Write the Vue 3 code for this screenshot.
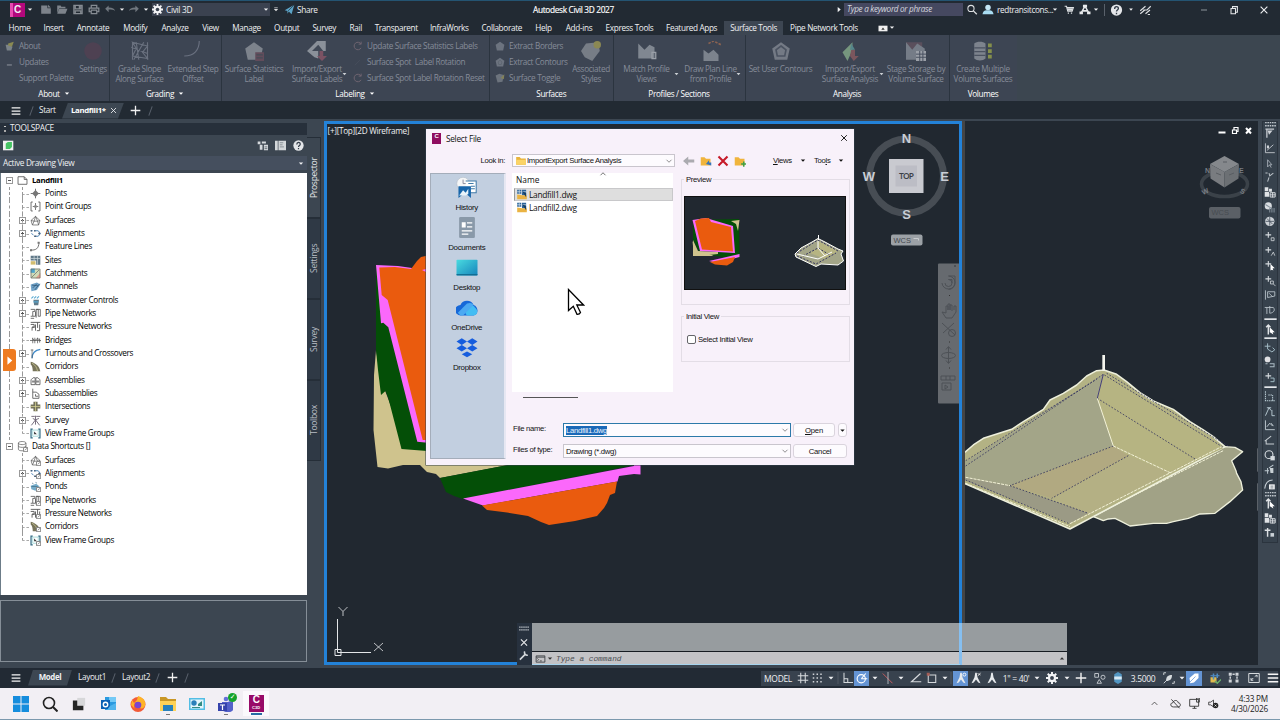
<template>
  <div class="window">
    <header class="titlebar">
      <div class="logo">C</div>
      <Icon name="down" class="c8" />
      <Icon v-for="n in ['new', 'open', 'save', 'print', 'undo']" :key="n" :name="n" class="qa" />
      <Icon name="down" class="c8" />
      <Icon name="redo" class="qa" />
      <Icon name="down" class="c8" />
      <div class="workspace"><Icon name="gear" class="c11" /><span>Civil 3D</span><Icon name="down" class="c8" /></div>
      <Icon name="downbar" class="c8" />
      <Icon name="plane" class="plane" />
      <span class="share">Share</span>
      <span class="app-title">Autodesk Civil 3D 2027</span>
      <Icon name="right" class="c8" />
      <div class="search">Type a keyword or phrase</div>
      <div class="account">
        <Icon name="search" class="w16" />
        <Icon name="person" class="w16" />
        <span class="user">redtransitcons...</span>
        <Icon name="down" class="c8" />
        <Icon name="cart" class="w20" />
        <Icon name="autodesk" class="w12" />
        <Icon name="down" class="w10" />
        <i class="vline"></i>
        <Icon name="help" class="w24" />
        <Icon name="down" class="c6" />
        <Icon name="assist" class="w24" />
      </div>
      <div class="win-buttons">
        <Icon name="min" /><Icon name="restore" /><Icon name="close" />
      </div>
    </header>

    <nav class="menu">
      <span v-for="t in tabs" :key="t[0]" :class="{ active: t[0] === 'Surface Tools' }" :style="{ width: t[1] + 'px' }">{{ t[0] }}</span>
      <Icon name="ribbonmin" class="ribbonmin" /><Icon name="down" class="c8" />
    </nav>

    <section class="ribbon">
      <div v-for="p in panels" :key="p.title" class="panel" :style="{ width: p.w + 'px' }">
        <div class="panel-body">
          <template v-for="(g, i) in p.groups" :key="i">
            <div v-if="g.list" class="small-list" :style="{ width: g.w + 'px' }">
              <div v-for="s in g.list" :key="s[1]"><Icon :name="s[0]" /><span>{{ s[1] }}</span></div>
            </div>
            <div v-else class="big" :style="{ width: g.w + 'px' }">
              <Icon :name="g.icon" />
              <span v-for="l in g.text" :key="l">{{ l }}</span>
              <Icon v-if="g.drop" name="down" class="drop" />
            </div>
          </template>
        </div>
        <div class="panel-title">{{ p.title }}<Icon v-if="p.more" name="down" class="c8" /></div>
      </div>
    </section>

    <div class="doc-tabs">
      <Icon name="burger" class="burger" />
      <i class="slash"></i>
      <span class="start">Start</span>
      <div class="doc-active"><b>Landfill1*</b><Icon name="close" /></div>
      <Icon name="plus" class="plus" />
      <i class="slash"></i>
    </div>

    <main>
      <aside class="toolspace">
        <div class="ts-col">
          <div class="ts-head"><i></i>TOOLSPACE</div>
          <div class="ts-tools">
            <Icon name="cube" /><span></span><Icon name="panes" /><Icon name="sheet" /><Icon name="help" />
          </div>
          <div class="ts-combo">Active Drawing View<Icon name="down" class="c8" /></div>
          <div class="tree">
            <div v-for="(r, i) in tree" :key="i" class="row" :class="{ root: r.root, bold: i === 0, last: r.last, only: i > 20 }">
              <i v-if="!r.root" class="branch"></i>
              <i class="box" :class="{ on: r.box, minus: r.root }"></i>
              <Icon :name="r.icon" />
              <span>{{ r.text }}</span>
            </div>
            <div class="flyout"><Icon name="right" /></div>
          </div>
          <div class="ts-preview"></div>
        </div>
        <div class="ts-tabs">
          <span class="cur">Prospector</span><span>Settings</span><span>Survey</span><span>Toolbox</span>
        </div>
      </aside>

      <section class="view left">
        <svg width="632" height="538" viewBox="327 124 632 538">
          <path fill="#cfc38d" d="M376 350 374 375 373.500 430 377.500 467 388 468.500 403 465 420 465 427 472 436 474 440 478 508 465 508 430 400 430 381 380Z" />
          <path fill="#044f07" d="M376 265V350L378 370 381 395 385.500 391 388 397 401.500 449 440 452V300Z" />
          <path fill="#044f07" d="M440 478 508 465H634L463 499 454 496 446 492Z" />
          <path fill="#fb68fb" d="M376 265 398 266 412 268 430 269V443L417.300 441.700 388.300 327.300 383.300 322.700 381 323.300Z" />
          <path fill="#ea5b0e" d="M379.300 267.500 395 267 411 269 417 261 421 257 430 255V440H422.700L387.700 300 381.700 295Z" />
          <path fill="#fb68fb" d="M422 270l4-1v3zM463 498.500 634 466 634 460H640.500V474.500L634 474 619 476 617.500 481.500 483 505.500Z" />
          <path fill="#ea5b0e" d="M482 505.500 617 481.500 615 493 610 495 607 503 604 508 597 516 575 521 549 525 541 522 528 516 507 512.500 487 510Z" />
          <text x="327.500" y="133.500" class="vp" textLength="82">[+][Top][2D Wireframe]</text>
          <g fill="none" stroke="#e4e6e8">
            <path d="M337.500 619V652.500H371M335 649.500h6v6h-6z" />
            <path stroke-width=".8" d="M338.500 607l4.500 4.500 4.500-4.500M343 611.500v4.500M374 643l9 8M383 643l-9 8" />
          </g>
          <circle cx="906.500" cy="176" r="37" fill="none" stroke="#474d54" stroke-width="7" />
          <path fill="#c9cad0" d="M889 159h34.500v34h-34.500z" />
          <path fill="#bcbdc5" d="M895.500 165.500h21.500v21h-21.500z" />
          <text x="906.500" y="179" text-anchor="middle" class="top" textLength="15">TOP</text>
          <g class="nesw" text-anchor="middle">
            <text x="906.500" y="143">N</text><text x="869" y="181">W</text>
            <text x="944.500" y="181">E</text><text x="906.500" y="218.500">S</text>
          </g>
          <rect x="891" y="234.500" width="31.500" height="11" rx="2" fill="#9ca1a6" />
          <text x="893.500" y="242.500" class="wcs">WCS</text>
          <path d="M913.500 238.500h5v2" fill="none" stroke="#c8cbce" />
          <rect x="938" y="263.500" width="24" height="140" rx="1" fill="#666a6f" />
          <g fill="none" stroke="#4d5156">
            <path d="M954 265l2 2M956 265l-2 2M942 283a6.500 6.500 0 1 0 6.500-7h6.500v7a6.500 6.500 0 0 1-6.500 6.500M945 283a3.500 3.500 0 1 0 3.500-3.500h3.500v3.500" />
            <path d="M942 312l4 6h6l4-6v-6h-2v4M942 312l4 1v-7h2v4-6h2v6-5h2v6M942 323l13 12M954 323l-11 10" />
            <circle cx="952" cy="333" r="3.500" />
            <path d="M948.500 347v16M946 349.500l2.500-3 2.500 3M946 360.500l2.500 3 2.500-3" />
            <ellipse cx="948.500" cy="355.500" rx="7" ry="3" />
            <path d="M941 376h14v4H941zM946 376v4M950 376v4M942 383h9v7h-9zM945 385l3 2-3 2z" />
            <path stroke="#333" d="M949 295.500h1M949 342h1M949 368h1" />
          </g>
        </svg>
      </section>
      <i class="divider"></i>
      <section class="view right">
        <svg width="293" height="544" viewBox="965 121 293 544">
          <g transform="translate(940 340) scale(.3333)" stroke-linejoin="round">
            <path fill="#a1a286" stroke="#eef0dc" stroke-width="4" d="M855 320 885 322 908 335 875 362 888 392 890 400 903 425 908 450 870 485 825 520 780 522 745 535 700 545 680 550 640 550 570 558 545 545 525 535 505 537 490 542 460 530Z" />
            <path fill="#b3b284" stroke="#eef0dc" stroke-width="4.500" d="M60 345 77 335 100 315 130 295 215 268 250 245 310 208 330 180 370 160 410 135 440 108 470 92 492 90 530 103 560 125 600 158 640 183 700 208 750 245 790 270 820 290 855 320 390 567 60 425Z" />
            <path fill="#a3a588" d="M60 375 490 103 472 175 520 318 210 437 60 410Z" />
            <path fill="#b6b482" d="M490 103 850 325 690 398 565 347 520 318 472 175Z" />
            <path fill="#b1a981" d="M210 437 520 318 565 347 335 475Z" />
            <path fill="#b4b084" d="M335 475 565 347 690 398 830 322 445 525Z" />
            <path fill="#9b9a85" d="M60 410 210 437 445 520 390 550 77 422Z" />
            <g fill="none" stroke="#34345e" stroke-width="2.500" stroke-dasharray="5 5">
              <path d="M77 378 490 103 850 322M77 362 470 118M500 100 865 318M472 175 770 360M520 318 210 437M565 347 335 475M210 437 445 520M77 420 390 552" />
              <path stroke-dasharray="none" stroke="#302a78" d="M490 103 472 175" />
            </g>
            <g fill="none" stroke="#f3f2d8" stroke-width="3">
              <path d="M472 175 520 318" />
              <path stroke-dasharray="9 3" d="M77 412 210 437M520 318 690 398M390 551 845 320M530 492 850 332M77 430 390 560" />
            </g>
            <path stroke="#f4f5ee" stroke-width="8" d="M491 45V92" />
            <path stroke="#8d9298" stroke-width="3" d="M954 325V395M954 430V512M60 150H73V172H60" fill="none" />
          </g>
          <ellipse cx="1224.500" cy="184" rx="23" ry="12.500" fill="none" stroke="#3b4249" stroke-width="3.500" />
          <path fill="#85888c" d="M1224.500 156l14.500 8-14.500 8-14.500-8z" />
          <path fill="#797c80" d="M1210 164l14.500 8v15.500l-14-9z" />
          <path fill="#6c7074" d="M1239 164l-14.500 8v15.500l14-9z" />
          <path stroke="#595d62" d="M1216 173l5 2M1229 175l5-2M1223 162h4" />
          <g fill="#777c82" class="mini"><text x="1202" y="194" transform="rotate(-25 1205 192)">W</text><text x="1240" y="194" transform="rotate(25 1243 192)">S</text><text x="1205" y="173">N</text><text x="1239" y="173">E</text></g>
          <rect x="1209" y="207" width="31.500" height="11.500" rx="2" fill="#5b6066" />
          <text x="1211.500" y="215" class="wcs dim">WCS</text>
          <g fill="none" stroke="#fff" stroke-width="1.500">
            <path d="M1218.500 132.500h7M1246 128l5 5.500M1251 128l-5 5.500" stroke-width="2" />
            <path d="M1232.500 130h4v3.500h-4zM1234 129.500v-2h4v4h-1.500" stroke-width="1.200" />
          </g>
        </svg>
      </section>
      <aside class="rail">
        <Icon v-for="(r, i) in rail" :key="i" :name="r" :class="{ thin: r === 'bar' || r === 'grip' }" />
      </aside>

      <div class="command">
        <div class="cmd-grip"><Icon name="grip" /><Icon name="close" /><Icon name="wrench" /></div>
        <div class="cmd-main">
          <div class="cmd-history"></div>
          <div class="cmd-input"><Icon name="prompt" /><Icon name="down" class="c8" /><span>Type a command</span><Icon name="up" class="c8" /></div>
          <i class="through"></i><i class="under"></i>
        </div>
      </div>

      <div class="dialog">
        <div class="d-title"><div class="d-logo">C</div>Select File<Icon name="close" /></div>
        <div class="d-look">
          <label>Look in:</label>
          <div class="combo"><Icon name="folder" /><span>ImportExport Surface Analysis</span><Icon name="chev" class="chev" /></div>
          <Icon name="back" class="tool" /><Icon name="folderup" class="tool" /><Icon name="delete" class="tool" /><Icon name="folderadd" class="tool" />
          <span class="drop-btn views"><u>V</u>iews</span><Icon name="down" class="c8" />
          <span class="drop-btn tools">Too<u>l</u>s</span><Icon name="down" class="c8" />
        </div>
        <div class="d-body">
          <div class="places">
            <div v-for="p in places" :key="p[1]"><Icon :name="p[0]" /><span>{{ p[1] }}</span></div>
          </div>
          <div class="d-main">
            <div class="d-top">
              <div class="files">
                <div class="name">Name<Icon name="chevup" /></div>
                <div class="file sel"><Icon name="dwg" />Landfill1.dwg</div>
                <div class="file"><Icon name="dwg" />Landfill2.dwg</div>
              </div>
              <div class="side">
                <div class="group g1"><span>Preview</span>
                  <svg width="162" height="94" viewBox="684 196 162 94">
                    <path fill="#111" d="M684 196h162v94H684z" /><path fill="#212830" d="M685 197h160v92H685z" />
                    <path fill="#cfc38d" d="M692.500 241 697 252 718 252 712 256 694 256Z" />
                    <path fill="#044f07" d="M693 220 739 219 739.500 258 728 258 700 253 693 240Z" />
                    <path fill="#cfc38d" d="M693 240v16h7l18-2v-2l-20-1zM731 221l8.500-1-1.500 11-2-7z" />
                    <path fill="#fb68fb" d="M692.500 220 706 218 733 226 735 253 700 251ZM709 261 739.500 254v3L717 263z" />
                    <path fill="#ea5b0e" d="M695 221 701 218.500 709 218 711 222 731 227 733 251.500 702 249.500ZM710 262 735 257 733 262 727 265.500 715 264.500Z" />
                    <path fill="#a3a588" stroke="#fff" d="M795 254 801 248 812 242 818 238.500 825 242 838 249 843 251 841 254 843.500 261 838 265 821 264 816 266.500 796 257Z" />
                    <path fill="#b6b482" d="M818 241 838 251 825 259 810 253 818 248z" />
                    <path fill="none" stroke="#34345e" stroke-dasharray="2 1.500" d="M797 253 818 240 838 251M797 256 816 264 836 253M803 256 818 248 830 255" />
                    <path stroke="#fff" d="M818.500 235v5M797 254l21 5 14-7M818 241v7l7 8" fill="none" />
                  </svg>
                </div>
                <div class="group g2"><span>Initial View</span><label><i></i>Select Initial View</label></div>
              </div>
            </div>
            <i class="scroll"></i>
            <div class="field first">
              <label>File name:</label>
              <div class="combo focus"><mark>Landfill1.dwg</mark><Icon name="chev" class="chev" /></div>
              <button class="open"><u>O</u>pen</button><button class="more"><Icon name="down" /></button>
            </div>
            <div class="field">
              <label>Files of type:</label>
              <div class="combo"><span>Drawing (*.dwg)</span><Icon name="chev" class="chev" /></div>
              <button class="cancel">Cancel</button>
            </div>
          </div>
        </div>
        <svg class="cursor" width="18" height="28" viewBox="0 0 18 28"><path fill="#fff" stroke="#000" stroke-width="1.300" d="M1.500 1.500V22.500L6.300 18.300 10 26.300Q12.500 26.500 13.500 24.500L9.800 17H16.500Z" /></svg>
      </div>
    </main>

    <footer class="status">
      <div class="layouts">
        <Icon name="burger" class="burger" />
        <div class="model"><b>Model</b></div>
        <span class="lay">Layout1</span><i class="slash"></i><span class="lay l2">Layout2</span><i class="slash"></i>
        <Icon name="plus" class="plus" /><i class="slash"></i>
      </div>
      <div class="toggles">
        <span v-for="(s, i) in status" :key="i" :class="{ on: s[2], txt: s[3], arrow: s[0] === 'down' }" :style="{ width: s[1] + 'px' }">
          <template v-if="s[3]">{{ s[3] }}</template><Icon v-else :name="s[0]" />
        </span>
      </div>
    </footer>

    <footer class="taskbar">
      <div class="apps">
        <span v-for="a in apps" :key="a" :class="a"><Icon v-if="a !== 'civil'" :name="a" /><em v-else>C<small>C3D</small></em></span>
      </div>
      <div class="tray">
        <Icon name="chevup" /><Icon name="cloudoff" /><Icon name="monitor" /><Icon name="mute" />
        <div class="clock">4:33 PM<br>4/30/2026</div>
      </div>
    </footer>
  </div>
</template>

<script setup>
import { h } from 'vue'

// every glyph sits on a 16 x 16 grid
const S = (d, c = '#cfd3d8', w = 1.4) => `<path d="${d}" fill="none" stroke="${c}" stroke-width="${w}"/>`
const F = (d, c = '#cfd3d8') => `<path d="${d}" fill="${c}"/>`
const link = F('M9 9h7v7H9z', '#fff') + S('M9.500 9.500h6v6h-6zM11.500 13.500l3-3', '#555', 1)
const surf = S('M1.500 8 8 2l6.500 6-2 6.500h-9zM1.500 8l4.500 1 2-7 3 7 3.500-1M6 9l-2.500 5.500M11 9l1.500 5.500M6 9h5', '#555', 1)
const align = S('M1 4h3M6 4h6l3 4-3 4H8M5 10l-3-2', '#4f86b8', 1.4) + F('M1 3h2v2H1zM6 3h2v2H6zM12 7h3v2h-3zM6 11h3v2H6z', '#4a6078')
const pipe = S('M1 2h6v3H4v7H1M4 12h4V5M9 14V2h3v10h3V2h-6M1 15h5', '#555', 1.2)
const pressure = S('M1 2h14M1 5h5v4H3v5M8 5v9M11 2v8M14 5v9h-4M3 9h4', '#555', 1.3)
const corr = F('M1 1C9 3 14 8 15 15H4C4 10 3 6 1 5z', '#77745a') + S('M3 3c5 3 7 7 8 12', '#d8d39a', 1)
const frame = S('M4 1.500H1.500v13H4M12 1.500h2.500v13H12', '#356e86', 1.800) + S('M4 3h8v9H4z', '#8cc', 1) + F('M6 5l4 4H6z', '#333')
const person = F('M7 1h2l1 6 4 8-3-1-3-4-3 4-3 1 4-8z', '#e6e9ec')
const sparkle = S('M6 2v8M2 6h8', '#d5dade', 1.500)
const shell = 'M8 1 15 6 13 15H3L1 6z'
const fold = F('M1 3h5l2 2h6v9H1z', '#f0b43c')

const icons = {
  down: F('M3 5.500h10L8 11z', 'currentColor'), up: F('M3 10h10L8 5z', 'currentColor'), right: F('M5 2l7 6-7 6z', 'currentColor'),
  downbar: S('M4 4h8', '#ddd', 1.600) + F('M3 7h10l-5 5z', '#ddd'),
  new: F('M1 2h9v4h5v8H1zM11 1l4 4h-4z', '#7d838b'), open: F('M1 2h5l1 2h6v2H4l-3 7zM4 7h12l-3 7H1z', '#7d838b'),
  save: S('M2 2h12v12H2zM4 2v5h8V2M4 14v-4h8v4M10 3v3', '#868c93', 1.800), print: S('M4 6V2h8v4M3 11H1V6h14v5h-2M4 9h8v5H4z', '#868c93', 1.800),
  undo: F('M1 7l5-5v3c6 0 9 2 9 5-2-2-5-2-9-2v4z', '#70777f'), redo: F('M15 7l-5-5v3C4 5 1 7 1 10c2-2 5-2 9-2v4z', '#70777f'),
  gear: S('M8 0v16M0 8h16M2.300 2.300l11.400 11.400M13.700 2.300 2.300 13.700', '#f2f3f5', 2.600) + '<circle cx="8" cy="8" r="5.600" fill="#f2f3f5"/><circle cx="8" cy="8" r="2.600" fill="#3a4350"/>',
  plane: F('M1 9 15 1 11 15 7 11 5 14V10z', '#5ba3c7') + S('M15 1 6 10', '#25303a', 1),
  search: '<circle cx="6.500" cy="6.500" r="4.500" fill="none" stroke="#e0e2e4" stroke-width="1.500"/>' + S('M10 10l5 5', '#e0e2e4', 1.800),
  person: '<circle cx="8" cy="5" r="4" fill="#c5e6f5"/>' + F('M0 15c1-6 4-6 8-6s7 0 8 6z', '#a9dcf2'),
  cart: S('M1 2h3l2 8h7l2-6H5', '#dcdfe2', 1.800) + F('M5 5h9l-1 4H6zM6 12h2v2H6zM11 12h2v2h-2z', '#dcdfe2'),
  autodesk: S('M3 12 8 3l5 9M5 10h6', '#e6e8ea', 2.200) + F('M5 1h6v4H5zM0 11h5v4H0zM11 11h5v4h-5z', '#e6e8ea'),
  help: '<circle cx="8" cy="8" r="7.500" fill="#e4e6e9"/>' + S('M5.500 6.500c0-4 5-4 5-.500 0 2-2.500 2-2.500 4M8 11.500v2', '#333c48', 1.800),
  assist: S('M1 9l7-6M5 8h5l5-5M1 13l6-5M8 13l6-5M11 14h3', '#dfe1e4', 1.500),
  min: S('M4 8h8', '#9aa0a6', 1.200), restore: S('M4 6h6v7H4zM6 6V3.500h6.500V11H10', '#e5e7e9', 1.400), close: S('M3.500 3.500l9 9M12.500 3.500l-9 9', 'currentColor', 1.500),
  ribbonmin: F('M0 3h16v10H0z', '#f0f0f0') + F('M5 10h6L8 6z', '#333'),
  burger: S('M1 3h14M1 8h14M1 13h14', '#f5f5f5', 2), plus: S('M8 1v14M1 8h14', '#f0f0f0', 1.900),
  about: F('M1 6h6l5 3-2 6H3z', '#7b8389') + F('M5 4l9-3-3 8-6-2z', '#8a8a52'), updates: F('M3 12h8v1.500H3z', '#969ba4'), blank: '',
  settings: '<circle cx="8" cy="8" r="7" fill="#643c52" opacity=".45"/>',
  grade: S('M2 1l12 3-4 5 4 5-12-2 3-6zM1 5l13 5M5 1l2 14M11 1 3 15M14 1v14M2 1v14', '#6a717f', .9),
  step: S('M13 0c0 7-4 12-12 12', '#6a7180', .9),
  stat: F(shell, '#7d838c') + F('M9 9h7v7H9z', '#624c5b') + S('M10 11h5M10 13.500h5', '#444c58', 1),
  ioLabel: F('M0 8 8 0h7v8H9v6L6 13z', '#8a9099') + F('M4 8l5-5 4 5z', '#414957') + F('M10 8h3v4h3l-4 4-4-4h2z', '#7b5263'),
  reset: S('M13 5a6 6 0 1 0 0 6M13 1v4H9', '#6f6470', 1.600), rot: S('M3 13l8-8', '#49505e', 1),
  pent: F(shell, '#6c737f'), pent2: F(shell, '#6c737f') + S('M8 5 11 8 10 12H6L5 8z', '#59606c', 1), toggle: F('M1 4 7 1l7 2-2 11-8 1z', '#6c737d') + F('M9 8l6-6-1 8z', '#83825a'),
  assoc: F('M0 8 4 2l10-1 1 7-6 8-6-3z', '#777d86') + '<circle cx="13" cy="3" r="3" fill="#8b8853"/>',
  match: F('M1 2l5 5 4-4 4 2v9H1z', '#808791') + S('M12 9h3v5h-3z', '#9aa0a8', 1),
  plan: F('M2 7l4 3 4-3 4 4v5H2z', '#7c838d') + S('M6 2l4-2 6 3', '#8c6351', 1.300).replace('fill="none"', 'fill="none" stroke-dasharray="2 1"'),
  contour: F(shell, '#747a85') + S('M8 4l4 3-1 5H5L4 7z', '#4b5361', 1.300),
  ioAnalysis: F('M2 9 10 1v6l-4 9z', '#76967e') + F('M9 7h3v5h3l-4 4-3-4z', '#7b565d') + F('M9 2l3 5H8z', '#55868b'),
  stage: F('M0 1h13v13H0z', '#5a4f5c') + F('M0 1l5 6 4-5 6 4v9H0z', '#757c87') + F('M8 8h8v8H8z', '#9a9fa7') + S('M8 10.500h8M8 13h8M11 8v8M13.500 8v8', '#485160', .8),
  volumes: F('M1 2c2-2 7-2 9 0v12c-2 2-7 2-9 0z', '#7d838d') + S('M1 5.500h9M1 8.500h9M1 11.500h9', '#4b5260', 1) + F('M12 2h3v3h-3zM12 6.500h3v3h-3zM12 11h3v3h-3z', '#85904b'),
  cube: F('M0 1h15v14H0z', '#f2f2f2') + F('M4 5l3-2h6v7l-3 3H4z', '#47c464'), panes: F('M1 2h4v4H1zM7 2h6v3H7zM4 7h4v7H4zM10 7h6v8h-6z', '#d5d9dd') + S('M11 10h4M11 12.500h4', '#444e59', 1),
  sheet: F('M0 1h4v14H0zM5 1h11v14H5z', '#d3d7da') + S('M7 4h5M7 7h4M7 10h6', '#6a737b', 1),
  page: S('M1.500 2.500h9l4 4v7h-13zM10.500 2.500v4h4', '#555', 1.200),
  point: S('M8 1v14M1 8h14', '#666', 1.300) + F('M8 3l5 5-5 5-5-5z', '#777'), pgroup: S('M4 1.500H1.500v13H4M12 1.500h2.500v13H12M8 3v10M4 8h8', '#555', 1.200) + F('M8 5l3 3-3 3-3-3z', '#888'),
  surf, align, feature: S('M1 13c7 1 12-2 12-11', '#555', 1.200) + F('M0 12h3v3H0zM11 1h3v3h-3z', '#777'),
  sites: F('M1 1h14v13H9V8H1z', '#5f7787') + F('M1 9h7v5H1z', '#d2bd70') + S('M1 5h14M6 1v7M11 1v13', '#d5dfe3', 1), catch: F('M1 1h14v14H1z', '#cfdcb8') + F('M1 1h6v6H1z', '#4ba3cb') + F('M8 15l7-8v8z', '#e1a08b') + S('M2 14 13 3M1.500 1.500h13v13h-13z', '#666', 1),
  channel: F('M1 5l9-3 5 3-5 8-8 2z', '#73a5ca') + S('M3 6l9 1M4 10l6-6M7 13l7-9', '#345b7b', 1.200), storm: F('M5 7h8l-1 8H6z', '#607b8b') + S('M2 5l3-3M6 5l3-3M10 5l3-3M5 10h7', '#56a7d0', 1.500),
  pipe, pressure, bridge: S('M0 8h16M4 4v8M7 4v8M11 4v8M14 5v6M3 5l4 3 4-3 4 3', '#555', 1.100), turnout: S('M3 15C3 7 8 3 15 2', '#3f8ac9', 1.800) + S('M3 15V2M1 3h4', '#555', 1), corr,
  assembly: S('M1.500 14V7l3-3h3v10zM8.500 14V4h3l3 3v7z', '#555', 1.200) + F('M3 8h10v3H3z', '#888'), subasm: S('M4 1v14h9V9L9 6H4M8 9v3h4', '#555', 1.200),
  inter: F('M5 1h6v14H5zM1 5h14v6H1z', '#74725a') + S('M8 1v14M1 8h14', '#ddd998', 1), survey: S('M2 2h5M9 2h6M8 1v6M8 7 2 15M8 7l6 8M4 5l4 2 5-2M8 7v7', '#6a6070', 1.300), frame,
  db: S('M2 3c0-3 11-3 11 0v9c0 3-11 3-11 0zM2 3c0 3 11 3 11 0M2 7c0 3 11 3 11 0', '#555', 1) + link,
  surfL: surf + link, alignL: align + link, pondL: F('M1 7l8-3 5 4-6 6-6-2z', '#74abc9') + S('M3 3l2 1M8 2l2 1M2 8h9', '#406b80', 1) + link, pipeL: pipe + link, pressureL: pressure + link, corrL: corr + link, frameL: frame + link,
  bar: S('M0 8h16', '#e3e6e9', 2.200), grip: S('M1 6h14M1 10h14', '#c1c7cd', 1.800).replace('fill="none"', 'fill="none" stroke-dasharray="2 1"'),
  r1: S('M2 2h12M4 3v11', '#c7ccd2', 1.800) + F('M5 4h7l-5 6z'), r2: S('M2 1v13h13M4 11l9-8', '#c7ccd2', 1.200) + F('M4 4h3v4H4z'), r3: S('M5 3v10l3-3 2 4M5 3l6 7H8', '#aab2ba', 1.200), r4: S('M2 2h3M7 2l1 4 5-4M7 8l-2 6', '#bdc4ca', 1.400),
  r5: F('M1 1h5v5H1zM1 7h6v7H1zM7 3h4v4H7z', '#e0e3e6') + S('M8.500 8.500h7v6h-7zM12 8v7M8 11.500h8', '#dce0e3', 1.300), r6: '<circle cx="6" cy="6" r="5" fill="#d8dce0"/>' + S('M8 9v6M11 9v6M14 9v6M2 4l8 5', '#84909b', 1.400), r7: '<circle cx="8" cy="8" r="6.500" fill="#ccd1d6"/>' + S('M2 8h12M8 2v12M4 4l8 8', '#4b5662', 1.200),
  r8: sparkle + S('M10 10h4v4h-4z', '#c8cdd2', 1.200), r9: sparkle + S('M10 14l3-5 2 5', '#c8cdd2', 1.200), r10: sparkle + F('M9 6l6 6h-3l1 3-2-1-2 1z', '#fff'), r11: sparkle + S('M9 9h4v4H9zM13 13l3 3', '#c8cdd2', 1.200),
  r12: S('M2 1v13M5 3h10v6L5 11zM7 5l5 5', '#bcc5cc', 1.200), r13: S('M1 4h12c4 5-2 8-5 8V2M4 4v9', '#bcc5cc', 1.200), r14: S('M3 5l3-3 3 3M6 3v12', '#e0e3e6', 2) + F('M8 5l7 7h-3l1 3-5-3z', '#fff'),
  r15: S('M1 5h8M5 1v8M5 9l6 4 4-3-3-3', '#a8c1ca', 1.300), r16: '<circle cx="5" cy="4" r="4" fill="#e1e1e4"/>' + S('M8 10h6v4H8M2 10h3', '#adbdc6', 1.400), r17: sparkle + S('M9 9h5v5H9', '#a6c0c9', 1.300),
  r18: S('M2 1v13h13M6 6h6v8', '#b9cbd3', 1.400).replace('fill="none"', 'fill="none" stroke-dasharray="2 1"'), r19: S('M2 14 7 3l3 4M4 3h6M11 6v8h4', '#b9cbd3', 1.300), r20: S('M2 1v13h13M4 10l4-5 4 4M10 5l3 4', '#c2ccd2', 1.300), r21: S('M1 9l9-7M3 7v6h11', '#c8ced3', 1.400),
  r22: '<circle cx="7" cy="7" r="5.500" fill="none" stroke="#d6dbdf" stroke-width="1.500"/>' + F('M9 9h6v6H9z', '#d6dbdf'), r23: S('M1 10h6M7 6l6-4M5 6v8', '#bdc8cf', 1.400) + F('M8 6h5v7H9z', '#c8d0d4'), r24: S('M1 14C2 6 6 2 12 2', '#c7cfd5', 1.400) + F('M7 8h8v7H7z', '#f1f2f3') + S('M9 10.500h4M9 13h4', '#58636d', 1), r25: S('M1 5h8M5 2v12', '#dce0e3', 2) + F('M9 9h5v5H9z', '#cbd2d7'),
  wrench: S('M2 14l8-8M9 2a4 4 0 0 0 4.500 5.500', '#d5d9dc', 2.400), prompt: S('M1 3h14v10H1zM1 5h14', '#3c3f43', 1.400) + S('M3 7l2 2-2 2M7 11h3', '#333', 1.200),
  folder: F('M1 3h5l2 2h7v9H1z', '#e8b33b') + F('M1 7h14v7H1z', '#fbd466'), back: F('M0 8l7-6v4h8v4H7v4z', '#ababb0'), folderup: fold + F('M8 12l4-5v3h3v4z', '#3576bd'), folderadd: fold + S('M13 8.500v7M9.500 12h7', '#3fa046', 2), delete: S('M2 2l12 12M14 2 2 14', '#c61a28', 2.800),
  chev: S('M3 5.500l5 5 5-5', '#555', 1.300), chevup: S('M3 10.500l5-5 5 5', '#444', 1.500),
  dwg: F('M1 1h6v6H1zM8 1h6v8H8z', '#2b6399') + S('M1 4h13M4 1v6', '#d7e5ef', 1) + F('M1 8l7 1 7 0v6H1z', '#eab343') + F('M8 3l6 3v6z', '#163e62'),
  history: '<circle cx="5" cy="5" r="4.800" fill="#f5f6f7" stroke="#b5bfca" stroke-width=".5"/>' + S('M5 2v3h3', '#889', .7) + F('M7 3h8v9H7z', '#fff') + S('M7 3h8v9H7M9 5h4M11 7h3M11 9h3', '#3f7aa8', .8) + F('M1.500 7h9.500v9l-4.500-4L1.500 16z', '#1765aa') + F('M2 14l3-4 2 2 2-3v4l-2 1z', '#e9f3fa'),
  documents: '<rect x="2" y="0" width="12" height="16" rx="1" fill="#8999a9"/>' + F('M4 4h3v4H4zM8 4h4v1H8zM8 7h4v1H8zM4 10h8v1H4zM4 12.500h5v1H4z', '#fff'),
  desktop: '<defs><linearGradient id="dg" x2="1" y2="1"><stop stop-color="#49dbe0"/><stop offset="1" stop-color="#1684bc"/></linearGradient></defs><rect y="2" width="16" height="12" rx=".6" fill="url(#dg)"/>' + F('M0 13h16v1H0z', '#126c92'),
  onedrive: F('M3 14a4 4 0 0 1 0-8 5.500 5.500 0 0 1 10 0c4 1 4 8 0 8z', '#1668d8') + F('M8 14a4 4 0 0 1 0-6c2-2 5-2 6 0 3 2 2 6-1 6z', '#42bdf3') + F('M1 12 8 5c3-1 4 0 5 1L5 14H3z', '#4ba9f2'),
  dropbox: F('M4 1l4 2.500-4 2.500-4-2.500zM12 1l4 2.500-4 2.500-4-2.500zM4 6l4 2.500L4 11 0 8.500zM12 6l4 2.500-4 2.500-4-2.500zM8 11l4 2.200L8 15.500l-4-2.300z', '#165dde'),
  grid: S('M5 1v14M11 1v14M1 5h14M1 11h14', '#d8dcdf', 1.400), dots: F('M1 2h2v2H1zM6 2h2v2H6zM11 2h2v2h-2zM1 7h2v2H1zM6 7h2v2H6zM11 7h2v2h-2zM1 12h2v2H1zM6 12h2v2H6zM11 12h2v2h-2z'), ortho: S('M4 1v13h12M4 9h5v5', '#d5d9dc', 1.400),
  polar: '<circle cx="7" cy="9" r="5.500" fill="none" stroke="#fff" stroke-width="1.500"/>' + S('M7 9h8M7 9l6-7', '#fff', 1.500), iso: S('M1 2l13 13', '#c65a60', 1.300) + S('M8 0v16', '#b8bec4', 1.200), angle: S('M14 2 2 13h13', '#d5d9dc', 1.600), osnap: S('M3 4h10v10H3z', '#d5d9dc', 1.400) + F('M1 1h4v4H1z', '#a35c56'),
  person2: person, annot: person + '<circle cx="12.500" cy="3.500" r="2" fill="none" stroke="#fff" stroke-width="1.200"/>', annot2: person + S('M11 5l3-4M10 2l4 2', '#ddd', 1.200),
  shapes: S('M1 2h5v5H1zM4 15l3-5 3 5z', '#c8cdd2', 1.200) + '<circle cx="12" cy="7" r="2.700" fill="none" stroke="#c8cdd2" stroke-width="1.200"/>', sphere: F('M3 3l5-3 5 3v10l-5 3-5-3z', '#5296c2') + F('M3 6h10v4H3z', '#d6e9f4'),
  leaf: F('M4 12c0-6 3-8 8-8 0 5-2 8-8 8z', '#d8dcdf') + S('M4 1H1v3M12 15h3v-3M1 15l4-4', '#d8dcdf', 1.200), tag: F('M2 8l7-6h5v6l-6 6-5 1z', '#fff') + S('M1 15 10 6', '#6594d3', 1),
  lock: F('M2 7h8v7H2z', '#e0bb4e') + F('M5 2h2v8H5zM10 2h2v6h-2z', '#4f8bc0') + S('M2 5h12', '#4f8bc0', 1.500) + S('M8 12l3 3 5-5', '#6ab06c', 1.800), nodes: F('M1 1h4v4H1zM10 1h4v4h-4zM1 10h4v4H1zM10 10h4v4h-4zM6 2h3v2H6zM2 6h2v3H2zM11 6h2v3h-2z'), clean: S('M1 2h14v12H1zM4 11l3-3M9 6l3-2v3M4 8v3h3', '#dadde0', 1.300), sep: S('M8 0v16', '#59626c', 1),
  windows: F('M0 0h7.500v7.500H0zM8.500 0H16v7.500H8.500zM0 8.500h7.500V16H0zM8.500 8.500H16V16H8.500z', '#168ddd'), find: '<circle cx="7" cy="7" r="5.500" fill="none" stroke="#222" stroke-width="1.600"/>' + S('M11 11l4.500 4.500', '#222', 2),
  tasks: F('M6 1h9v9H6z', '#d7d7d9') + F('M1 4h5v6h7v5H1z', '#252525'), outlook: F('M4 1h11v13H4z', '#2b9ae0') + F('M8 1h7v5H8z', '#74c9f6') + F('M0 4h9v9H0z', '#0b61b5') + '<circle cx="4.500" cy="8.500" r="2.200" fill="none" stroke="#fff" stroke-width="1.400"/>' + F('M9 10l6-3v7H6z', '#50b4ed'),
  firefox: '<circle cx="8" cy="8.500" r="7.500" fill="#f25a38"/>' + F('M2 4l2 3 3-3 1-4c6 2 8 5 7 10-2 3-4 3-5 2 2-4 0-6-3-6-3 1-4 4-2 7L1 9z', '#ffb327') + '<circle cx="8" cy="9" r="3.300" fill="#7a45d0"/>',
  explorer: F('M0 1h6l2 2h8v4H0z', '#c99726') + F('M0 5h16v10H0z', '#ffd257') + F('M3 9h10v6H3z', '#2881bd'), control: F('M0 2h16v12H0z', '#53bde4') + F('M1.500 3.500h13v9h-13z', '#e3f5fc') + '<circle cx="5" cy="7" r="2.700" fill="#287fb9"/>' + F('M9 8l4-3v5H9zM3 11h8v1H3z', '#348b83'),
  teams: '<circle cx="8" cy="3" r="2.300" fill="#6571d8"/><circle cx="12.500" cy="5" r="2" fill="#7c83e8"/>' + F('M4 6h11v8c-2 3-8 3-11 0z', '#5360c9') + F('M0 7h9v8H0z', '#3542ac') + S('M2 9h5M4.500 9v5', '#fff', 1.200),
  cloudoff: S('M5 13c-5 0-5-6-1-6 1-4 7-5 8 0 4 0 4 6 0 6zM2 2l12 13', '#333', 1.300), monitor: S('M1 2h13v10H1zM5 15h6M8 12v3M11 0h4v6h-4z', '#333', 1.300), mute: S('M1 6h3l4-3v10l-4-3H1z', '#333', 1.200) + '<circle cx="11" cy="11" r="4" fill="#222"/>' + S('M9.500 9.500l3 3M12.500 9.500l-3 3', '#fff', 1)
}
const Icon = (p) => h('svg', { class: 'ico', viewBox: '0 0 16 16', width: 12, height: 12, innerHTML: icons[p.name] })
Icon.props = ['name']

const tabs = [['Home', 35], ['Insert', 33], ['Annotate', 46], ['Modify', 38.5], ['Analyze', 41], ['View', 30], ['Manage', 42], ['Output', 38.5], ['Survey', 36.5], ['Rail', 26.5], ['Transparent', 54.5], ['InfraWorks', 51.5], ['Collaborate', 53.5], ['Help', 30], ['Add-ins', 41], ['Express Tools', 60], ['Featured Apps', 64.2], ['Surface Tools', 59.8], ['Pipe Network Tools', 81]]

const panels = [
  { title: 'About', more: true, w: 110, groups: [
    { w: 76, list: [['about', 'About'], ['updates', 'Updates'], ['blank', 'Support Palette']] },
    { w: 34, icon: 'settings', text: ['Settings'] }] },
  { title: 'Grading', more: true, w: 112, groups: [
    { w: 59, icon: 'grade', text: ['Grade Slope', 'Along Surface'] },
    { w: 48, icon: 'step', text: ['Extended Step', 'Offset'] }] },
  { title: 'Labeling', more: true, w: 268, groups: [
    { w: 64, icon: 'stat', text: ['Surface Statistics', 'Label'] },
    { w: 62, icon: 'ioLabel', text: ['Import/Export', 'Surface Labels'], drop: true },
    { w: 139, list: [['reset', 'Update Surface Statistics Labels'], ['rot', 'Surface Spot  Label Rotation'], ['reset', 'Surface Spot Label Rotation Reset']] }] },
  { title: 'Surfaces', w: 123.5, groups: [
    { w: 80, list: [['pent', 'Extract Borders'], ['pent2', 'Extract Contours'], ['toggle', 'Surface Toggle']] },
    { w: 42, icon: 'assoc', text: ['Associated', 'Styles'] }] },
  { title: 'Profiles / Sections', w: 132, groups: [
    { w: 66, icon: 'match', text: ['Match Profile', 'Views'], drop: true },
    { w: 62, icon: 'plan', text: ['Draw Plan Line', 'from Profile'], drop: true }] },
  { title: 'Analysis', w: 204, groups: [
    { w: 70, icon: 'contour', text: ['Set User Contours'] },
    { w: 69, icon: 'ioAnalysis', text: ['Import/Export', 'Surface Analysis'], drop: true },
    { w: 63, icon: 'stage', text: ['Stage Storage by', 'Volume Surface'] }] },
  { title: 'Volumes', w: 67, groups: [{ w: 67, icon: 'volumes', text: ['Create Multiple', 'Volume Surfaces'] }] }
]

const n = (icon, text, box, last) => ({ icon, text, box, last })
const tree = [
  { root: true, box: true, icon: 'page', text: 'Landfill1' },
  n('point', 'Points'), n('pgroup', 'Point Groups'), n('surf', 'Surfaces', true), n('align', 'Alignments', true),
  n('feature', 'Feature Lines'), n('sites', 'Sites'), n('catch', 'Catchments'), n('channel', 'Channels'),
  n('storm', 'Stormwater Controls', true), n('pipe', 'Pipe Networks', true), n('pressure', 'Pressure Networks'),
  n('bridge', 'Bridges'), n('turnout', 'Turnouts and Crossovers', true), n('corr', 'Corridors'),
  n('assembly', 'Assemblies', true), n('subasm', 'Subassemblies', true), n('inter', 'Intersections'),
  n('survey', 'Survey', true), n('frame', 'View Frame Groups', false, true),
  { root: true, box: true, icon: 'db', text: 'Data Shortcuts []' },
  n('surfL', 'Surfaces'), n('alignL', 'Alignments', true), n('pondL', 'Ponds'), n('pipeL', 'Pipe Networks'),
  n('pressureL', 'Pressure Networks'), n('corrL', 'Corridors'), n('frameL', 'View Frame Groups', false, true)
]

const rail = ['grip', 'r1', 'r2', 'r3', 'r4', 'r5', 'r6', 'r7', 'r8', 'r9', 'r10', 'r11', 'r12', 'r13', 'bar', 'r14', 'bar', 'r15', 'r16', 'r17', 'bar', 'r18', 'r19', 'r20', 'r21', 'r22', 'r23', 'r24', 'grip', 'r14', 'r5', 'r25']
const places = [['history', 'History'], ['documents', 'Documents'], ['desktop', 'Desktop'], ['onedrive', 'OneDrive'], ['dropbox', 'Dropbox']]
const apps = ['windows', 'find', 'tasks', 'outlook', 'firefox', 'explorer', 'control', 'teams', 'civil']

// [icon, width, highlighted, text]
const status = [
  ['', 34, false, 'MODEL'], ['grid', 15], ['dots', 15], ['down', 12], ['sep', 2], ['ortho', 15], ['polar', 15, true], ['down', 12],
  ['iso', 13], ['down', 14], ['angle', 15], ['osnap', 18], ['down', 8], ['sep', 4], ['annot', 15, true], ['annot2', 16], ['person2', 16],
  ['', 32, false, "1'' = 40'"], ['down', 9], ['gear', 22], ['down', 8], ['plus', 19], ['shapes', 19], ['sphere', 18],
  ['', 32, false, '3.5000'], ['leaf', 19], ['down', 8], ['tag', 16, true], ['lock', 26], ['nodes', 12], ['clean', 28], ['burger', 10]
]
</script>

<style>
body { margin: 0; overflow: hidden; background: #212830; }
</style>

<style scoped>
.window {
  width: 1280px;
  height: 720px;
  box-sizing: border-box;
  display: flex;
  flex-direction: column;
  overflow: hidden;
  font-family: "Open Sans", "Noto Sans", sans-serif;
  font-size: 8.2px;
  letter-spacing: -.33px;
  color: #eff0f2;
  background: #222a33;
  white-space: nowrap;
}
.ico { flex: none; display: block; }
.c8, .c6 { width: 8px; height: 7px; }
.c6 { width: 6px; }
.c11 { width: 11px; height: 11px; }

/* title bar */
.titlebar { height: 19px; flex: none; display: flex; align-items: center; border-top: 1px solid #245472; box-sizing: border-box; padding: 0 0 1px 10px; }
.logo { width: 15px; height: 14px; margin-right: 1px; background: linear-gradient(90deg, #e64bb0 20%, #b3087c 20%); font: bold 10px/13px "Liberation Sans", sans-serif; text-align: center; }
.qa { width: 16px; height: 11px; }
.logo + .c8 { margin-right: 4px; }
.workspace { margin-left: 2px; width: 118px; height: 13px; display: flex; align-items: center; background: #3b4250; font-size: 8.4px; }
.workspace span { flex: 1; padding-left: 3px; }
.workspace + .c8 { margin: 0 4px 0 2px; }
.plane { width: 11px; height: 11px; margin-right: 2px; }
.share { width: 236px; font-size: 8.3px; }
.app-title { width: 302px; font-size: 8.3px; color: #fff; -webkit-text-stroke: .15px #fff; }
.search { margin-left: 1px; width: 116px; padding-left: 3px; height: 13px; line-height: 12px; background: #454860; font-style: italic; color: #d4d6de; }
.account { display: flex; align-items: center; padding-left: 1px; width: 228px; }
.w16 { width: 16px; height: 11px; }
.w20 { width: 20px; height: 10px; }
.w12 { width: 12px; height: 11px; }
.w24 { width: 23px; height: 12px; }
.w10 { width: 10px; height: 7px; }
.user { margin-left: 1px; width: 54px; }
.vline { width: 1px; height: 12px; background: #59616b; margin-left: 3px; }
.win-buttons { flex: 1; display: flex; justify-content: space-between; padding: 0 10px 0 6px; }

/* ribbon tabs */
.menu { height: 16px; flex: none; display: flex; align-items: center; padding-left: 2px; }
.menu span { flex: none; text-align: center; height: 14px; line-height: 13px; margin-top: 2px; }
.menu .active { background: #3d4652; }
.ribbonmin { width: 10px; height: 9px; margin: 2px 0 0 14px; }

/* ribbon */
.ribbon { height: 66px; flex: none; display: flex; background: #3c4650; }
.panel { box-sizing: border-box; border-right: 1px solid #2b343f; background: #3d4553; display: flex; flex-direction: column; }
.panel:last-child { border: 0; }
.panel-body { height: 52px; display: flex; color: #868c99; }
.panel-title { height: 14px; line-height: 12px; padding-bottom: 1px; box-sizing: border-box; display: flex; align-items: center; justify-content: center; color: #fff; }
.panel-title .ico { margin-left: 3px; }
.small-list { flex: none; padding-top: 2.5px; }
.small-list div { display: flex; align-items: center; height: 16px; padding-left: 5px; white-space: pre; }
.small-list .ico { width: 10px; height: 10px; margin-right: 4px; }
.big { position: relative; flex: none; display: flex; flex-direction: column; align-items: center; padding-top: 6px; }
.big .ico { width: 20px; height: 20px; margin-bottom: 2.5px; }
.big span { line-height: 10px; }
.big .drop { position: absolute; right: 0; top: 36px; width: 7px; height: 6px; color: #cdd1d6; }

/* document tabs */
.doc-tabs { height: 18px; flex: none; display: flex; align-items: center; padding: 1px 0 0 10px; box-sizing: border-box; }
.burger { width: 12px; height: 10px; }
.slash { width: 1px; height: 10px; background: #59616c; transform: rotate(20deg); }
.doc-tabs .slash { margin-left: 9px; }
.start { margin-left: 7px; width: 23px; line-height: 10px; padding-bottom: 1px; }
.doc-active { width: 62px; height: 16px; display: flex; align-items: center; background: #3d4752; clip-path: polygon(6px 0, 100% 0, calc(100% - 6px) 100%, 0 100%); }
.doc-active b { padding: 0 0 1px 9px; width: 38px; font-size: 7.8px; color: #fff; line-height: 10px; }
.doc-active .ico { width: 9px; height: 9px; }
.plus { width: 11px; height: 11px; margin-left: 6px; }

main { position: relative; height: 549px; flex: none; display: flex; background: #3c4651; }

/* toolspace */
.toolspace { width: 324px; flex: none; display: flex; }
.ts-col { width: 307px; padding-top: 4px; display: flex; flex-direction: column; }
.ts-head { height: 12px; line-height: 10px; background: #27303b; font-size: 8.4px; display: flex; }
.ts-head i { width: 2px; height: 6px; margin: 3px 4px 0 4px; border-top: 1px solid #ccc; border-bottom: 2px solid #aaa; box-sizing: border-box; }
.ts-tools { height: 21px; display: flex; align-items: center; padding: 0 3px 0 3px; gap: 7px; }
.ts-tools .ico { width: 11px; height: 11px; }
.ts-tools span { flex: 1; }
.ts-combo { height: 14px; margin-bottom: 3px; line-height: 12px; background: #454f5e; display: flex; align-items: center; justify-content: space-between; padding: 0 2px 0 3px; font-size: 8.3px; }
.tree { position: relative; height: 422px; background: #fff; color: #000; padding-top: .6px; box-sizing: border-box; border-left: 1px solid #6c7c88; }
.row { position: relative; height: 13.33px; display: flex; align-items: center; padding-left: 18px; }
.row span { line-height: 10px; padding-bottom: 1px; }
.row .ico { width: 11px; height: 11px; margin: 0 4px 0 3px; position: relative; }
.row.root { padding-left: 5px; }
.row.bold { font-weight: bold; font-size: 7.8px; }
.box { position: relative; width: 8px; height: 7px; box-sizing: border-box; flex: none; }
.box.on { width: 7px; margin-right: 1px; border: 1px solid #999; background: linear-gradient(#555, #555) center/3px 1px no-repeat, linear-gradient(#555, #555) center/1px 3px no-repeat #fff; }
.box.minus { background: linear-gradient(#555, #555) center/3px 1px no-repeat #fff; }
.root .box { margin-right: 1px; }
.branch { position: absolute; left: 21px; top: 0; width: 6px; height: 50%; border-left: 1px dashed #999; border-bottom: 1px dashed #aaa; }
.row:not(.root)::before { content: ""; position: absolute; left: 8px; top: 0; height: 100%; border-left: 1px dashed #999; }
.row.only::before { display: none; }
.row:not(.root):not(.last)::after { content: ""; position: absolute; left: 21px; top: 50%; height: 50%; border-left: 1px dashed #999; }
.flyout { position: absolute; left: 2px; top: 176px; width: 13px; height: 22px; background: #ee7b20; border-radius: 0 3px 3px 0; display: flex; align-items: center; justify-content: center; color: #fff; }
.flyout .ico { width: 11px; height: 11px; }
.ts-preview { margin-top: 5px; height: 60px; border: 1px solid #858e97; }
.ts-tabs { width: 14px; padding-top: 18px; }
.ts-tabs span { display: flex; align-items: center; justify-content: center; height: 81px; width: 14px; box-sizing: border-box; writing-mode: vertical-rl; transform: rotate(180deg); font-size: 8.6px; color: #b9bec5; background: #2f3945; border: 1px solid #252e38; border-right: 0; }
.ts-tabs .cur { background: #3c4651; color: #e6e8ea; }

/* viewports */
.view { margin-top: 2px; box-sizing: border-box; flex: none; height: 544px; background: #212830; letter-spacing: 0; }
.view svg { display: block; }
.left { width: 638px; border: 3px solid #2382d8; }
.right { width: 293px; }
.divider { width: 3px; margin-top: 2px; height: 544px; background: #454545; }
.vp { font-size: 8.2px; fill: #eef0f2; }
.top { font: 600 8.5px "Open Sans", sans-serif; fill: #3b3f47; }
.nesw { font: bold 13px "Liberation Sans", sans-serif; fill: #c9ced6; }
.wcs { font: 7.5px "Liberation Sans", sans-serif; fill: #45494e; }
.dim { fill: #474c51; }
.mini { font: bold 7px "Liberation Sans", sans-serif; }

.rail { margin: 2px 0 0 4px; width: 16px; box-sizing: border-box; height: 422px; display: flex; flex-direction: column; align-items: center; background: #37424d; border: 1px solid #2b343e; }
.rail .ico { width: 11.500px; height: 14.7px; flex: none; }
.rail .thin { width: 13px; height: 12.3px; margin: -4px 0; }

/* command line */
.command { position: absolute; left: 517px; top: 504px; width: 550px; height: 42px; display: flex; }
.cmd-grip { width: 15px; flex: none; background: #27313e; display: flex; flex-direction: column; align-items: center; justify-content: space-between; padding: 0 2px 4px 0; box-sizing: border-box; }
.cmd-grip .ico { width: 12px; height: 11px; }
.cmd-main { position: relative; flex: 1; overflow: hidden; }
.cmd-history { height: 28px; background: #979c9f; border-bottom: 1px solid #171c22; }
.cmd-input { height: 13px; background: #c3c3c6; display: flex; align-items: center; padding: 0 1px 0 3px; color: #333; }
.cmd-input .ico:first-child { width: 11px; height: 10px; }
.cmd-input span { flex: 1; padding-left: 2px; letter-spacing: 0; font: italic 7.8px "Liberation Mono", monospace; color: #4c4f53; }
.through { position: absolute; left: 427px; top: 0; width: 3px; height: 42px; background: #86bff0; }
.under { position: absolute; left: 0; bottom: 0; width: 428px; height: 1px; background: #a6d4ee; }

/* file dialog */
.dialog { position: absolute; left: 426px; top: 10px; width: 428px; height: 336px; background: #f8f1fa; color: #111; font-family: "Liberation Sans", sans-serif; font-size: 7.7px; letter-spacing: -.3px; box-shadow: 0 0 0 .5px #33404c; }
.d-title { height: 19px; display: flex; align-items: center; padding: 0 5px 1px 6px; box-sizing: border-box; font: 8.3px "Open Sans", sans-serif; }
.d-title .ico { margin-left: auto; width: 10px; height: 10px; }
.d-logo { width: 9px; height: 11px; margin-right: 5px; background: #8f0d60; color: #fff; font: bold 6px/7px "Liberation Sans", sans-serif; text-align: center; }
.d-look { height: 25px; display: flex; align-items: center; box-sizing: border-box; }
.d-look label { width: 79px; text-align: right; margin-right: 7px; }
.combo { height: 13px; box-sizing: border-box; border: 1px solid #c9c5cd; background: #fdfbfe; display: flex; align-items: center; padding-left: 2px; }
.combo span { flex: 1; }
.d-look .combo { width: 163px; margin-right: 8px; }
.d-look .combo .ico:first-child { width: 12px; height: 11px; margin-right: 0; }
.chev { width: 8px; height: 8px; margin: 0 1px 0 auto; }
.tool { width: 12px; height: 12px; margin-right: 5px; }
.views { margin-left: 22px; width: 26px; }
.tools { margin-left: 7px; width: 23px; }
.drop-btn u, button u { text-underline-offset: 1px; }
.d-body { display: flex; }
.places { width: 76px; height: 286px; box-sizing: border-box; margin-left: 4px; background: #c2cfe0; border: 1px solid #a4adba; border-right: 2px solid #e6e7f2; display: flex; flex-direction: column; padding: 3px 1.500px 0 0; }
.places div { height: 40px; display: flex; flex-direction: column; align-items: center; }
.places .ico { width: 22px; height: 21px; margin-bottom: 5px; }
.places span { line-height: 9px; font-size: 7.9px; }
.d-main { margin-left: 6px; width: 338px; }
.d-top { display: flex; height: 219px; }
.files { width: 161px; background: #fff; font: 8.4px "Open Sans", sans-serif; }
.files .name { position: relative; height: 15px; line-height: 14px; padding-left: 4px; letter-spacing: 0; }
.name .ico { position: absolute; left: 87px; top: -3px; width: 8px; height: 8px; }
.file { height: 13px; line-height: 11px; display: flex; align-items: center; padding-left: 3px; box-sizing: border-box; }
.file.sel { background: #dedede; border: 1px solid #c8c8ca; border-left-color: #999; padding-left: 1px; margin-left: 2px; }
.file:not(.sel) { padding-left: 4px; }
.file .ico { width: 12px; height: 11px; margin-right: 1px; }
.side { margin-left: 8px; width: 169px; display: flex; flex-direction: column; }
.group { border: 1px solid #e3dde6; box-sizing: border-box; }
.group > span { display: table; margin: -5px 0 0 2px; padding: 0 2px; background: #f8f1fa; line-height: 9px; }
.g1 { margin-top: 6px; height: 126px; }
.g1 svg { display: block; margin: 12px 0 0 2px; }
.g2 { margin-top: 11px; height: 46px; }
.g2 label { display: flex; align-items: center; margin: 14px 0 0 5px; }
.g2 i { width: 7px; height: 7px; border: 1px solid #65656a; border-radius: 2px; background: #fff; margin-right: 2px; }
.scroll { display: block; width: 55px; height: 1px; margin: 5px 0 25px 11px; background: #555; }
.field { display: flex; align-items: center; height: 14px; padding-left: 1px; }
.field.first { margin-bottom: 7px; }
.field label { width: 50px; line-height: 10px; margin-bottom: 3px; }
.field .combo { width: 228px; height: 14px; margin-right: 2px; }
.field .focus { border: 1px solid #2c79a9; }
mark { background: #1a69b8; color: #eaf4ff; line-height: 9px; }
button { box-sizing: border-box; height: 14px; padding: 0; border: 1px solid #dad4dd; border-radius: 3px; background: #fdfbfe; color: inherit; font: inherit; letter-spacing: -.2px; }
.open { width: 42px; margin-right: 3px; }
.more { width: 9px; display: flex; align-items: center; justify-content: center; }
.more .ico { width: 7px; height: 7px; flex: none; }
.cancel { width: 54px; }
.cursor { position: absolute; left: 141px; top: 159px; }

/* layout tabs and drafting toggles */
.status { height: 20px; flex: none; display: flex; align-items: center; background: #222a34; padding-left: 10px; }
.layouts { width: 751px; display: flex; align-items: center; padding-bottom: 1px; }
.model { margin-left: 6px; width: 44px; height: 16px; line-height: 15px; text-align: center; background: #3d4752; clip-path: polygon(5px 0, 100% 0, calc(100% - 5px) 100%, 0 100%); font-size: 7.9px; }
.lay { margin-left: 6px; width: 35px; line-height: 10px; padding-bottom: 1px; }
.l2 { margin-left: 8px; }
.layouts .slash + .slash, .layouts .plus + .slash { margin-left: 8px; }
.layouts .plus { margin-left: 9px; }
.toggles { display: flex; align-items: center; height: 15px; background: #38424e; }
.toggles span { flex: none; height: 15px; display: flex; align-items: center; justify-content: center; }
.toggles .on { background: #6494d4; }
.toggles .txt { font-size: 8.5px; }
.toggles .ico { width: 12px; height: 12px; }
.toggles .arrow .ico { width: 8px; height: 8px; }

/* windows taskbar */
.taskbar { height: 32px; flex: none; display: flex; justify-content: space-between; background: #f2eff4; border-bottom: 1px solid #7b98ad; box-sizing: border-box; color: #222; }
.apps { display: flex; padding-left: 6px; }
.apps span { width: 29.4px; height: 31px; display: flex; align-items: center; justify-content: center; position: relative; }
.apps .ico { width: 16px; height: 16px; }
.apps .tasks .ico { width: 14px; height: 14px; }
.apps em { width: 15px; height: 17px; background: #980b68; color: #fff; font: bold 10px/10px "Liberation Sans", sans-serif; text-align: center; display: flex; flex-direction: column; }
.apps small { font-size: 4px; line-height: 5px; letter-spacing: 0; }
.apps .civil { background: #fbf9fc; width: 26px; height: 25px; margin: 3px 0 0 2px; }
.explorer::after, .teams::after, .civil::after { content: ""; position: absolute; bottom: 4px; width: 4px; height: 1.500px; background: #777; }
.apps .civil::after { width: 11px; height: 2px; background: #286ca4; bottom: 1px; }
.teams::before { content: "✓"; position: absolute; z-index: 1; right: 4px; top: 5px; width: 9px; height: 9px; border-radius: 50%; background: #15a32b; color: #fff; font: bold 7px/9px "DejaVu Sans", sans-serif; text-align: center; }
.tray { display: flex; align-items: center; padding-right: 12px; gap: 8px; }
.tray .ico { width: 11px; height: 11px; }
.tray .ico:first-child { margin-right: 3px; width: 9px; }
.clock { text-align: right; line-height: 10px; margin-left: 1px; width: 40px; letter-spacing: -.2px; }
</style>
